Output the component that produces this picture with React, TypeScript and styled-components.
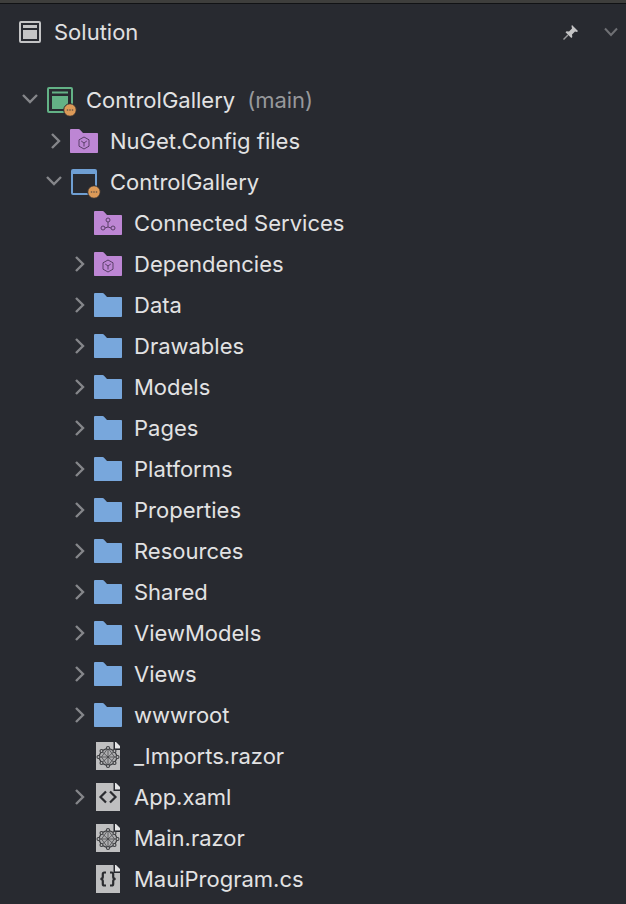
import React from 'react';
import styled, { createGlobalStyle } from 'styled-components';

const GlobalStyle = createGlobalStyle`
  html, body {
    margin: 0;
    padding: 0;
    background: #282a30;
  }
`;

type Kind = 'solution' | 'project' | 'purpleBox' | 'purpleNet' | 'folder' | 'razor' | 'xaml' | 'cs';

type Node = {
  label: string;
  depth: number;
  chevron?: 'open' | 'closed';
  kind: Kind;
  note?: string;
};

const nodes: Node[] = [
  { label: 'ControlGallery', depth: 0, chevron: 'open', kind: 'solution', note: '(main)' },
  { label: 'NuGet.Config files', depth: 1, chevron: 'closed', kind: 'purpleBox' },
  { label: 'ControlGallery', depth: 1, chevron: 'open', kind: 'project' },
  { label: 'Connected Services', depth: 2, kind: 'purpleNet' },
  { label: 'Dependencies', depth: 2, chevron: 'closed', kind: 'purpleBox' },
  { label: 'Data', depth: 2, chevron: 'closed', kind: 'folder' },
  { label: 'Drawables', depth: 2, chevron: 'closed', kind: 'folder' },
  { label: 'Models', depth: 2, chevron: 'closed', kind: 'folder' },
  { label: 'Pages', depth: 2, chevron: 'closed', kind: 'folder' },
  { label: 'Platforms', depth: 2, chevron: 'closed', kind: 'folder' },
  { label: 'Properties', depth: 2, chevron: 'closed', kind: 'folder' },
  { label: 'Resources', depth: 2, chevron: 'closed', kind: 'folder' },
  { label: 'Shared', depth: 2, chevron: 'closed', kind: 'folder' },
  { label: 'ViewModels', depth: 2, chevron: 'closed', kind: 'folder' },
  { label: 'Views', depth: 2, chevron: 'closed', kind: 'folder' },
  { label: 'wwwroot', depth: 2, chevron: 'closed', kind: 'folder' },
  { label: '_Imports.razor', depth: 2, kind: 'razor' },
  { label: 'App.xaml', depth: 2, chevron: 'closed', kind: 'xaml' },
  { label: 'Main.razor', depth: 2, kind: 'razor' },
  { label: 'MauiProgram.cs', depth: 2, kind: 'cs' },
];

const Chevron = ({ open }: { open: boolean }) => (
  <svg width="16" height="16" viewBox="0 0 16 16" fill="none" stroke="#85868a" strokeWidth="2.4">
    {open ? <path d="M1 3 8 10 15 3" /> : <path d="M6 1 13 8 6 15" />}
  </svg>
);

const Badge = () => (
  <>
    <circle cx="23" cy="23" r="6.300" fill="#dc9a58" stroke="#282a30" strokeWidth="1" />
    <path d="M19.800 23h1.400M22.300 23h1.400M24.800 23h1.400" stroke="#3a3a3c" strokeWidth="1.200" />
  </>
);

const FolderShape = ({ fill }: { fill: string }) => (
  <path
    d="M0 1.200C0 .5.500 0 1.200 0h7.400c.5 0 .9.200 1.200.5L13 4h14c.6 0 1 .4 1 1v18c0 .6-.4 1-1 1H1c-.6 0-1-.4-1-1z"
    fill={fill}
  />
);

const PageShape = () => (
  <>
    <path d="M0 0h17.500L24 6.500V28H0z" fill="#bfbfc0" />
    <path d="M19 0h1l4 4v2.500h-5z" fill="#e4e4e5" />
    <path d="M17.500 0H19v6.500h5V8h-6.500z" fill="#282a30" />
  </>
);

const RazorMark = () => (
  <g fill="none" stroke="#3c3d40">
    <path d="M12 6 18.500 9 21.500 15 18.500 21 12 24 5.500 21 2.500 15 5.500 9z" fill="#aeaeb0" strokeWidth="1.200" />
    <path d="M5.500 9 18.500 21M18.500 9 5.500 21M2.500 15h19M12 6v18M12 6 5.500 15 12 24 18.500 15z" strokeWidth="0.700" />
    <g fill="#bfbfc0" strokeWidth="1.100">
      <circle cx="12" cy="6" r="1.500" />
      <circle cx="18.500" cy="9" r="1.500" />
      <circle cx="21.500" cy="15" r="1.500" />
      <circle cx="18.500" cy="21" r="1.500" />
      <circle cx="12" cy="24" r="1.500" />
      <circle cx="5.500" cy="21" r="1.500" />
      <circle cx="2.500" cy="15" r="1.500" />
      <circle cx="5.500" cy="9" r="1.500" />
    </g>
  </g>
);

const ItemIcon = ({ kind }: { kind: Kind }) => {
  switch (kind) {
    case 'solution':
      return (
        <BadgedSvg width="30" height="26" viewBox="0 0 30 26">
          <rect x="1" y="1" width="24" height="24" fill="none" stroke="#63b286" strokeWidth="2" rx="1" />
          <rect x="5" y="4.500" width="16" height="2" fill="#63b286" />
          <rect x="5" y="9" width="16" height="13" fill="#63b286" />
          <Badge />
        </BadgedSvg>
      );
    case 'project':
      return (
        <BadgedSvg width="30" height="26" viewBox="0 0 30 26">
          <rect x="1" y="1" width="24" height="24" fill="none" stroke="#6f9fd3" strokeWidth="2" rx="1" />
          <rect x="1" y="1" width="24" height="4" fill="#6f9fd3" />
          <Badge />
        </BadgedSvg>
      );
    case 'purpleBox':
      return (
        <svg width="28" height="24" viewBox="0 0 28 24">
          <FolderShape fill="#bd86d4" />
          <g fill="none" stroke="#5a3f68" strokeWidth="1">
            <path d="M14 8 19 10.800v6.400L14 20 9 17.200v-6.400z" />
            <path d="M11.200 12 14 14l2.800-2M14 14v3.500" />
          </g>
        </svg>
      );
    case 'purpleNet':
      return (
        <svg width="28" height="24" viewBox="0 0 28 24">
          <FolderShape fill="#bd86d4" />
          <g fill="none" stroke="#5a3f68" strokeWidth="1">
            <circle cx="14" cy="9" r="2" />
            <circle cx="9" cy="17" r="2" />
            <circle cx="19" cy="17" r="2" />
            <path d="M14 11v5M11 17 14 16l3 1" />
          </g>
        </svg>
      );
    case 'folder':
      return (
        <svg width="28" height="24" viewBox="0 0 28 24">
          <FolderShape fill="#78a7dc" />
        </svg>
      );
    case 'razor':
      return (
        <svg width="24" height="28" viewBox="0 0 24 28">
          <PageShape />
          <RazorMark />
        </svg>
      );
    case 'xaml':
      return (
        <svg width="24" height="28" viewBox="0 0 24 28">
          <PageShape />
          <path d="M10 8.500 4.500 14 10 19.500M14 8.500 19.500 14 14 19.500" fill="none" stroke="#2b2c30" strokeWidth="2.200" />
        </svg>
      );
    default:
      return (
        <svg width="24" height="28" viewBox="0 0 24 28">
          <PageShape />
          <path
            d="M10 7.500H8.300C7.300 7.500 6.800 8 6.800 9v3c0 1.200-.6 1.800-2.300 2 1.700.2 2.300.8 2.300 2v3c0 1 .5 1.500 1.500 1.500H10M14 7.500h1.700c1 0 1.500.5 1.500 1.500v3c0 1.200.6 1.800 2.300 2-1.700.2-2.300.8-2.300 2v3c0 1-.5 1.500-1.500 1.500H14"
            fill="none"
            stroke="#2b2c30"
            strokeWidth="2.200"
          />
        </svg>
      );
  }
};

const isPage = (kind: Kind) => kind === 'razor' || kind === 'xaml' || kind === 'cs';
const isBadged = (kind: Kind) => kind === 'solution' || kind === 'project';

const App = () => {
  return (
    <Panel>
      <GlobalStyle />
      <TopStrip />
      <Header>
        <HeaderIcon width="22" height="22" viewBox="0 0 22 22">
          <rect x="1" y="1" width="20" height="20" rx="1" fill="none" stroke="#c4c4c5" strokeWidth="2" />
          <rect x="4" y="4" width="14" height="3" fill="#c4c4c5" />
          <rect x="4" y="9" width="14" height="9" fill="#c4c4c5" />
        </HeaderIcon>
        <Title>Solution</Title>
        <HeaderActions>
          <svg width="18" height="18" viewBox="0 0 18 18">
            <path d="M10 2 16 8l-1 1-2-.5-3 3 .3 2.500-1 1L3.500 9.200l1-1 2.500.3 3-3L9.500 3z" fill="#c4c4c5" />
            <path d="M6 12 1.500 16.500" stroke="#9a9a9c" strokeWidth="1.500" />
          </svg>
          <svg width="14" height="10" viewBox="0 0 14 10" fill="none" stroke="#6f7074" strokeWidth="2">
            <path d="M1 1.500 7 8 13 1.500" />
          </svg>
        </HeaderActions>
      </Header>
      <Tree>
        {nodes.map((node, i) => (
          <Row key={i} $depth={node.depth}>
            <Toggle>{node.chevron && <Chevron open={node.chevron === 'open'} />}</Toggle>
            <IconSlot $inset={isPage(node.kind) ? 2 : isBadged(node.kind) ? 1 : 0}>
              <ItemIcon kind={node.kind} />
            </IconSlot>
            <Label>{node.label}</Label>
            {node.note && <Note>{node.note}</Note>}
          </Row>
        ))}
      </Tree>
    </Panel>
  );
};

const Panel = styled.div`
  width: 626px;
  height: 904px;
  overflow: hidden;
  background: #282a30;
  font-family: Inter, 'Liberation Sans', sans-serif;
`;

const TopStrip = styled.div`
  height: 3px;
  background: #3e3e3c;
  border-bottom: 1px solid #111214;
`;

const Header = styled.div`
  display: flex;
  align-items: center;
  height: 55px;
  padding: 0 8px 0 19px;
`;

const HeaderIcon = styled.svg`
  margin-right: 13px;
`;

const Title = styled.div`
  font-size: 22px;
  color: #e0e0e1;
`;

const HeaderActions = styled.div`
  display: flex;
  align-items: center;
  gap: 24px;
  margin-left: auto;
`;

const Tree = styled.div`
  display: flex;
  flex-direction: column;
  margin-top: 20px;
`;

const Row = styled.div<{ $depth: number }>`
  display: flex;
  align-items: center;
  height: 41px;
  padding-left: ${(p) => 22 + p.$depth * 24}px;
`;

const Toggle = styled.div`
  display: flex;
  justify-content: center;
  width: 16px;
  margin-right: 8px;
`;

const IconSlot = styled.div<{ $inset: number }>`
  display: flex;
  flex: none;
  box-sizing: border-box;
  width: 40px;
  padding-left: ${(p) => p.$inset}px;
`;

const BadgedSvg = styled.svg`
  overflow: visible;
`;

const Label = styled.span`
  font-size: 22px;
  color: #e2e2e3;
  white-space: nowrap;
`;

const Note = styled.span`
  margin-left: 12px;
  font-size: 22px;
  color: #97989b;
`;

export default App;
